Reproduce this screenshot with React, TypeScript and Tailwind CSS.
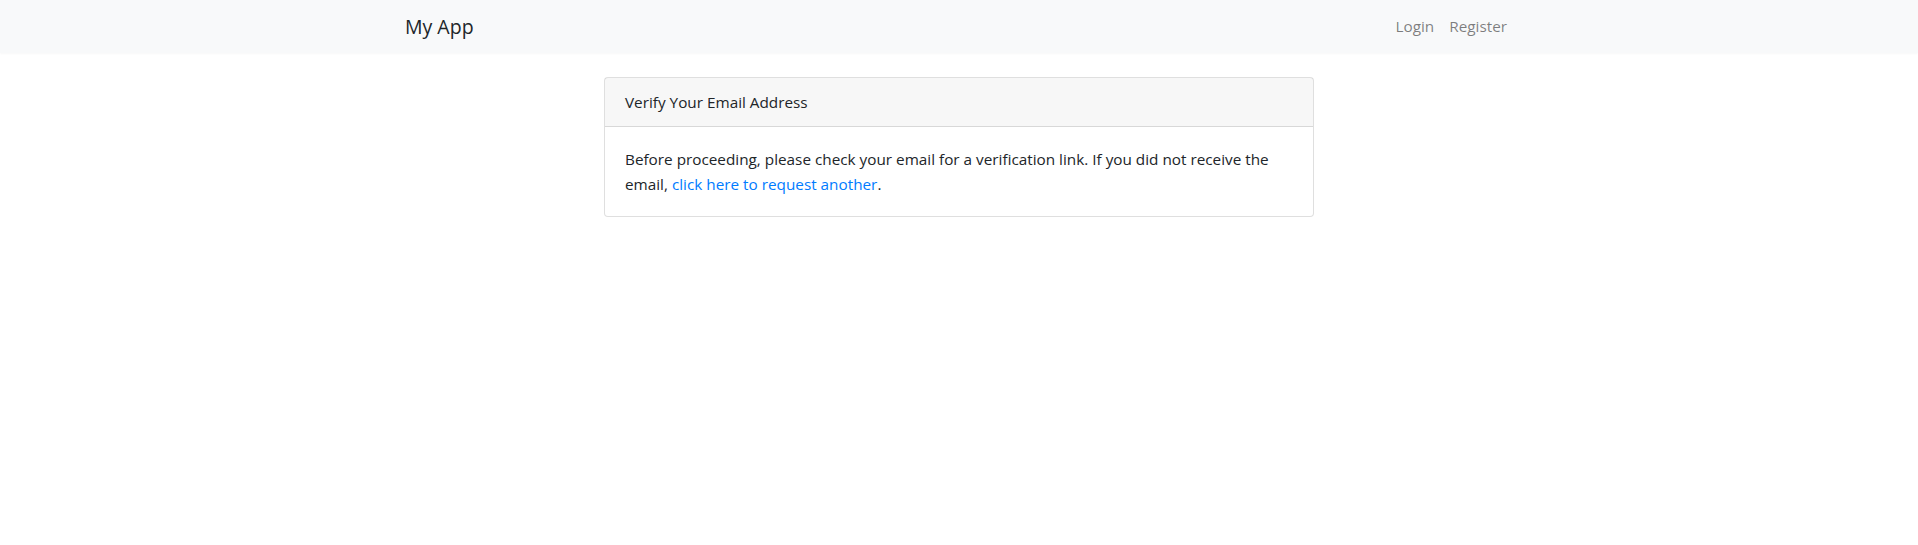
export default function App() {
  return (
    <div
      className="min-h-screen bg-white text-[#212529] text-[15.3px] leading-[24px]"
      style={{ fontFamily: '"Open Sans", "Noto Sans", sans-serif' }}
    >
      {/* navbar */}
      <nav className="h-[53px] bg-[#f8f9fa] shadow-[0_1px_2px_rgba(0,0,0,0.03)]">
        <div className="mx-auto flex h-full max-w-[1140px] items-center justify-between px-[15px]">
          <a href="#" className="text-[19.5px] leading-[28px] text-[#212529] pl-[1px]">
            My App
          </a>
          <ul className="flex items-center pb-[1px]">
            <li>
              <a href="#" className="block px-[8px] text-[15.3px] text-black/50">
                Login
              </a>
            </li>
            <li>
              <a href="#" className="block px-[7px] text-[15.3px] text-black/50">
                Register
              </a>
            </li>
          </ul>
        </div>
      </nav>

      {/* main */}
      <main className="py-6">
        <div className="mx-auto flex max-w-[1140px] justify-center px-[15px]">
          <div className="w-[710px] rounded-[4px] border border-black/[0.125] bg-white">
            <div className="border-b border-black/[0.125] bg-black/[0.03] px-5 py-3 leading-[24px]">
              Verify Your Email Address
            </div>
            <div className="px-5 pt-[20px] pb-[20px] leading-[24.5px]">
              Before proceeding, please check your email for a verification link. If you did not
              receive the email,{" "}
              <a href="#" className="text-[#007bff]">
                click here to request another
              </a>
              .
            </div>
          </div>
        </div>
      </main>
    </div>
  );
}
